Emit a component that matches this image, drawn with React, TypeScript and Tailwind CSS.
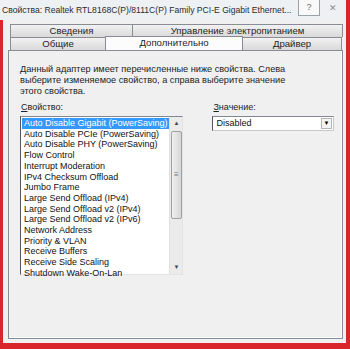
const properties = [
  "Auto Disable Gigabit (PowerSaving)",
  "Auto Disable PCIe (PowerSaving)",
  "Auto Disable PHY (PowerSaving)",
  "Flow Control",
  "Interrupt Moderation",
  "IPv4 Checksum Offload",
  "Jumbo Frame",
  "Large Send Offload (IPv4)",
  "Large Send Offload v2 (IPv4)",
  "Large Send Offload v2 (IPv6)",
  "Network Address",
  "Priority & VLAN",
  "Receive Buffers",
  "Receive Side Scaling",
  "Shutdown Wake-On-Lan",
];

const font = "font-['Liberation_Sans',Arial,sans-serif]";

function Tab({ label, width, active }: { label: string; width: string; active?: boolean }) {
  return (
    <div
      className={`${width} flex items-center justify-center border border-[#898c95] border-b-0 -mr-px ${
        active
          ? "bg-[#fcfcfc] h-[14px] -mt-px relative z-10 border-b border-b-[#fcfcfc] -mb-px"
          : "bg-gradient-to-b from-[#f2f2f2] to-[#d9d9d9] h-[13px]"
      } text-[9.6px] text-[#1e1e1e]`}
    >
      {label}
    </div>
  );
}

export default function App() {
  return (
    <div className={`w-[350px] h-[349px] bg-[#f0f0f0] flex flex-col overflow-hidden ${font}`}>
      {/* title bar */}
      <div className="h-[20px] flex items-start border-r-4 border-[#d8262b] bg-[#eef1f4]">
        <div className="pl-[2px] pt-[4px] text-[8.6px] leading-[12px] text-[#2b2b2b] whitespace-nowrap w-[297px]">
          Свойства: Realtek RTL8168C(P)/8111C(P) Family PCI-E Gigabit Ethernet...
        </div>
        <div className="w-[22px] h-[16px] ml-[1px] border border-t-0 border-[#9aa1ab] bg-[#f9f9f9] flex items-center justify-center text-[9px] text-[#666]">
          ?
        </div>
        <div className="flex-1 flex justify-center pt-[2px] text-[9px] text-[#8a8a8a]">✕</div>
      </div>

      {/* body */}
      <div className="flex-1 flex flex-col border-l-[3px] border-r-4 border-b-[6px] border-[#d8262b] pl-[5px] pr-[3px] pt-[4px] pb-[4px]">
        <div className="pl-[2px] flex flex-col">
          <div className="flex">
            <Tab label="Сведения" width="w-[123px]" />
            <Tab label="Управление электропитанием" width="w-[211px]" />
          </div>
          <div className="flex">
            <Tab label="Общие" width="w-[96px]" />
            <Tab label="Дополнительно" width="w-[138px]" active />
            <Tab label="Драйвер" width="w-[100px]" />
          </div>
        </div>

        {/* panel */}
        <div className="flex-1 border border-[#898c95] bg-[#f0f0f0] pl-[11px] pr-[8px] pt-[13px] shadow-[inset_-1px_-1px_0_#ffffff]">
          <p className="text-[9.2px] leading-[11px] text-[#222]">
            Данный адаптер имеет перечисленные ниже свойства. Слева
            <br />
            выберите изменяемое свойство, а справа выберите значение
            <br />
            этого свойства.
          </p>

          <div className="flex mt-[4px]">
            {/* property list */}
            <div className="w-[164px] flex flex-col">
              <div className="text-[9px] leading-[12px] text-[#222] pl-[1px]">
                <span className="underline">С</span>войство:
              </div>
              <div className="mt-[3px] h-[159px] flex border border-t-[#828790] border-l-[#55585f] border-r-[#e3e3e3] border-b-[#e3e3e3] bg-white">
                <div className="flex-1 pl-[1px] pt-[1px] text-[9px] leading-[10.7px] text-[#111] whitespace-nowrap">
                  {properties.map((p, i) => (
                    <div
                      key={p}
                      className={i === 0 ? "bg-[#3399ff] text-white pl-[2px]" : "pl-[2px]"}
                    >
                      {p}
                    </div>
                  ))}
                </div>
                {/* scrollbar */}
                <div className="w-[13px] bg-[#ebebeb] border-l border-[#e0e0e0] flex flex-col items-center">
                  <div className="h-[13px] flex items-center justify-center text-[6px] text-[#444]">▲</div>
                  <div className="w-[11px] h-[88px] mt-[1px] rounded-[2px] border border-[#a0a0a0] bg-gradient-to-r from-[#f0f0f0] to-[#d6d6d6] flex items-center justify-center text-[8px] text-[#777]">
                    ≡
                  </div>
                  <div className="flex-1" />
                  <div className="h-[13px] flex items-center justify-center text-[6px] text-[#444]">▼</div>
                </div>
              </div>
            </div>

            {/* value */}
            <div className="ml-[29px] w-[122px] flex flex-col">
              <div className="text-[9px] leading-[12px] text-[#222] pl-[1px]">
                <span className="underline">З</span>начение:
              </div>
              <div className="mt-[3px] h-[15px] flex items-center border border-t-[#828790] border-l-[#55585f] border-r-[#c8c8c8] border-b-[#c8c8c8] bg-white">
                <div className="flex-1 pl-[3px] text-[9px] text-[#111]">Disabled</div>
                <div className="w-[11px] h-[11px] mr-[1px] border border-[#b5b5b5] bg-[#f4f4f4] flex items-center justify-center text-[6px] text-black">▼</div>
              </div>
            </div>
          </div>
        </div>
      </div>
    </div>
  );
}
